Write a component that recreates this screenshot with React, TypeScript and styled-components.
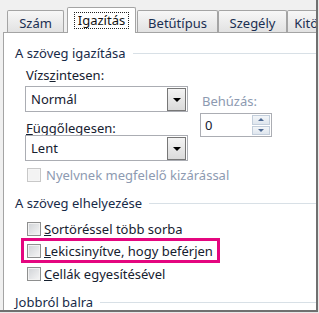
import styled, { createGlobalStyle } from "styled-components"

const Global = createGlobalStyle`
  body {
    margin: 0;
    background: #e9e9e9;
  }
`

const Frame = styled.div`
  width: 318px;
  height: 312px;
  box-sizing: border-box;
  border-right: 2px solid #707070;
  border-bottom: 2px solid #707070;
  background: #f0f0f0;
  display: flex;
  flex-direction: column;
  overflow: hidden;
  padding-left: 3px;
  font-family: "Noto Sans", "Open Sans", sans-serif;
  font-size: 13px;
  color: #16202f;
`

const TabRow = styled.div`
  display: flex;
  align-items: flex-end;
  height: 32px;
  flex: none;
  padding-left: 4px;
  position: relative;
  z-index: 1;
`

const Tab = styled.div<{ $w: number; $active?: boolean }>`
  box-sizing: border-box;
  flex: none;
  width: ${p => p.$w}px;
  height: ${p => (p.$active ? 26 : 22)}px;
  margin: ${p => (p.$active ? "0 1px -1px 3px" : "0")};
  border: 1px solid #a4a4a4;
  border-bottom: none;
  border-radius: 2px 2px 0 0;
  background: ${p => (p.$active ? "#fff" : "linear-gradient(#f7f7f7, #e2e2e2)")};
  color: ${p => (p.$active ? "#111" : "#1a2f52")};
  display: flex;
  align-items: center;
  justify-content: center;
  white-space: nowrap;
  overflow: hidden;
  padding-top: ${p => (p.$active ? 0 : 2)}px;
`

const Focus = styled.span`
  border: 1px dotted #222;
  padding: 0 3px;
  line-height: 15px;
`

const Panel = styled.div`
  flex: 1;
  background: #fff;
  border-top: 1px solid #a4a4a4;
  border-left: 1px solid #a4a4a4;
  padding: 12px 0 0 11px;
  display: flex;
  flex-direction: column;
  align-items: flex-start;
`

const SectionHead = styled.div<{ $mt?: number }>`
  align-self: stretch;
  display: flex;
  align-items: center;
  gap: 7px;
  height: 16px;
  line-height: 16px;
  margin-top: ${p => p.$mt ?? 0}px;
  color: #172a48;
  white-space: nowrap;
  &::after {
    content: "";
    flex: 1;
    height: 1px;
    background: #d8e0e6;
  }
`

const Label = styled.div<{ $mt?: number; $ml?: number; $disabled?: boolean }>`
  line-height: 14px;
  margin-top: ${p => p.$mt ?? 0}px;
  margin-left: ${p => p.$ml ?? 0}px;
  color: ${p => (p.$disabled ? "#8d9ab1" : "inherit")};
  white-space: nowrap;
`

const FieldRow = styled.div`
  display: flex;
  gap: 12px;
  margin: 4px 0 0 10px;
`

const Column = styled.div<{ $pt?: number }>`
  display: flex;
  flex-direction: column;
  padding-top: ${p => p.$pt ?? 0}px;
`

const Combo = styled.div`
  box-sizing: border-box;
  width: 163px;
  height: 26px;
  border: 1px solid #abadb3;
  background: #fff;
  display: flex;
  align-items: stretch;
  padding-left: 5px;
`

const ComboText = styled.span`
  flex: 1;
  display: flex;
  align-items: center;
`

const DropBtn = styled.div`
  box-sizing: border-box;
  width: 19px;
  margin: 1px 1px 0 0;
  border: 1px solid #777;
  background: linear-gradient(#f4f4f4, #dadada);
  display: flex;
  align-items: center;
  justify-content: center;
  &::after {
    content: "";
    border-left: 4px solid transparent;
    border-right: 4px solid transparent;
    border-top: 4px solid #000;
  }
`

const Spinner = styled.div`
  box-sizing: border-box;
  width: 72px;
  height: 24px;
  margin-top: 5px;
  border: 1px solid #abadb3;
  display: flex;
  align-items: stretch;
  padding-left: 4px;
`

const SpinButtons = styled.div`
  display: flex;
  flex-direction: column;
  gap: 1px;
  width: 18px;
  margin: 1px 1px 1px 0;
`

const SpinBtn = styled.div<{ $up?: boolean }>`
  flex: 1;
  border: 1px solid #c3cedb;
  background: linear-gradient(#f3f6f9, #dfe6ee);
  display: flex;
  align-items: center;
  justify-content: center;
  &::after {
    content: "";
    border-left: 3px solid transparent;
    border-right: 3px solid transparent;
    ${p => (p.$up ? "border-bottom" : "border-top")}: 3px solid #4e6a94;
  }
`

const CheckRow = styled.div<{ $mt?: number; $highlight?: boolean }>`
  display: flex;
  align-items: center;
  gap: 3px;
  height: 14px;
  line-height: 14px;
  white-space: nowrap;
  margin-top: ${p => p.$mt ?? 0}px;
  margin-left: ${p => (p.$highlight ? 6 : 12)}px;
  ${p =>
    p.$highlight &&
    `
    border: 3px solid #e4067f;
    padding: 3px 4px 2px 3px;
    `}
`

const Box = styled.span<{ $disabled?: boolean }>`
  box-sizing: border-box;
  width: 14px;
  height: 14px;
  flex: none;
  border: 1px solid ${p => (p.$disabled ? "#c8c8c8" : "#8e8f8f")};
  box-shadow: inset 0 0 0 1px ${p => (p.$disabled ? "#f6f6f6" : "#f2f2f2")};
  background: ${p =>
    p.$disabled ? "#f3f3f3" : "linear-gradient(135deg, #cfd2d6, #f6f6f6)"};
`

const CheckText = styled.span<{ $disabled?: boolean }>`
  color: ${p => (p.$disabled ? "#8d9ab1" : "inherit")};
  margin-left: ${p => (p.$disabled ? 2 : 0)}px;
`

export default function App() {
  return (
    <>
      <Global />
      <Frame>
        <TabRow>
          <Tab $w={57}>Szám</Tab>
          <Tab $w={69} $active>
            <Focus>Igazítás</Focus>
          </Tab>
          <Tab $w={81}>Betűtípus</Tab>
          <Tab $w={69}>Szegély</Tab>
          <Tab $w={60}>Kitöltés</Tab>
        </TabRow>
        <Panel>
          <SectionHead>A szöveg igazítása</SectionHead>
          <Label $mt={7} $ml={11}>
            Vízs<u>z</u>intesen:
          </Label>
          <FieldRow>
            <Column>
              <Combo>
                <ComboText>Normál</ComboText>
                <DropBtn />
              </Combo>
              <Label $mt={9} $ml={1}>
                <u>F</u>üggőlegesen:
              </Label>
              <Combo>
                <ComboText>Lent</ComboText>
                <DropBtn />
              </Combo>
            </Column>
            <Column $pt={8}>
              <Label $ml={2} $disabled>
                Behúzás:
              </Label>
              <Spinner>
                <ComboText>0</ComboText>
                <SpinButtons>
                  <SpinBtn $up />
                  <SpinBtn />
                </SpinButtons>
              </Spinner>
            </Column>
          </FieldRow>
          <CheckRow $mt={7}>
            <Box $disabled />
            <CheckText $disabled>Nyelvnek megfelelő kizárással</CheckText>
          </CheckRow>
          <SectionHead $mt={13}>A szöveg elhelyezése</SectionHead>
          <CheckRow $mt={11}>
            <Box />
            <CheckText>
              <u>S</u>ortöréssel több sorba
            </CheckText>
          </CheckRow>
          <CheckRow $mt={2} $highlight>
            <Box />
            <CheckText>
              <u>L</u>ekicsinyítve, hogy beférjen
            </CheckText>
          </CheckRow>
          <CheckRow $mt={4}>
            <Box />
            <CheckText>
              <u>C</u>ellák egyesítésével
            </CheckText>
          </CheckRow>
          <SectionHead $mt={13}>Jobbról balra</SectionHead>
        </Panel>
      </Frame>
    </>
  )
}
